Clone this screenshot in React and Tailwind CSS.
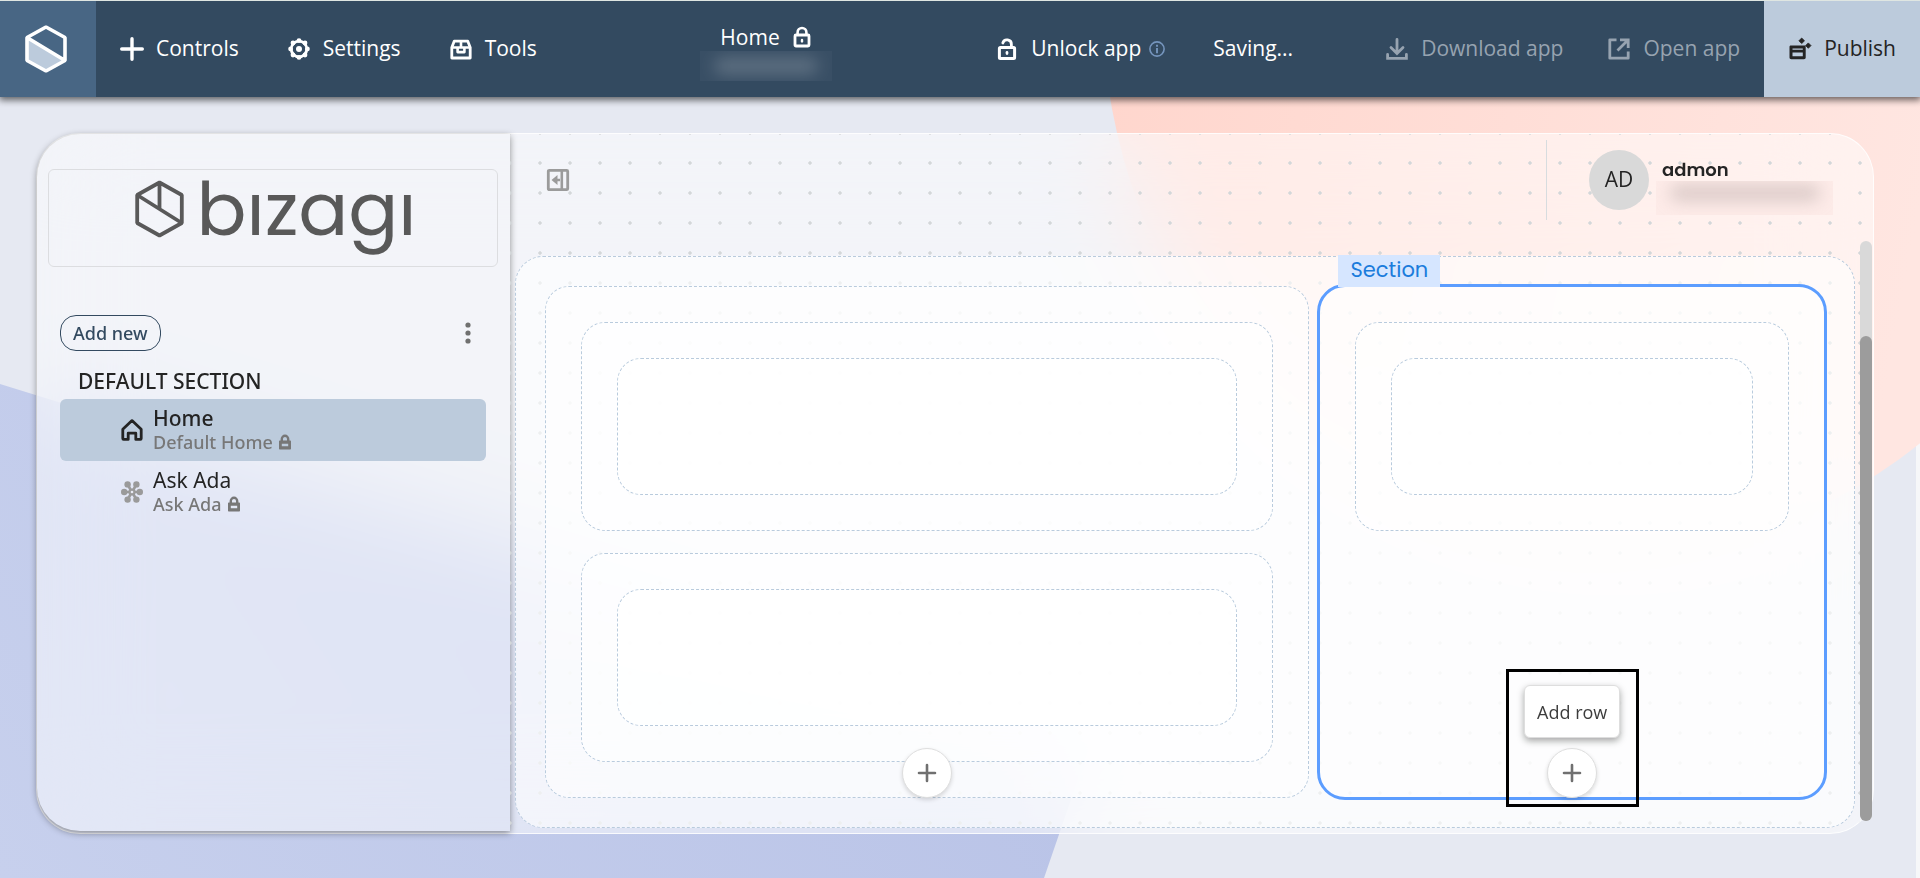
import { useState } from 'react';

const PlusIcon = () => (
  <svg className="w-6 h-6" viewBox="0 0 24 24" fill="none" stroke="currentColor" strokeWidth={3.4} strokeLinecap="round">
    <path d="M12 1.7v20.6M1.7 12h20.6" />
  </svg>
);

const GearIcon = () => (
  <svg className="w-6 h-6" viewBox="0 0 24 24">
    <circle cx="12" cy="12" r="7.8" fill="none" stroke="currentColor" strokeWidth={2.8} />
    <g fill="currentColor">
      <circle cx="12" cy="3.6" r="2.4" />
      <circle cx="12" cy="20.4" r="2.4" />
      <circle cx="3.6" cy="12" r="2.4" />
      <circle cx="20.4" cy="12" r="2.4" />
      <circle cx="6" cy="6" r="2.4" />
      <circle cx="18" cy="6" r="2.4" />
      <circle cx="6" cy="18" r="2.4" />
      <circle cx="18" cy="18" r="2.4" />
      <circle cx="12" cy="12" r="3" />
    </g>
  </svg>
);

const ToolsIcon = () => (
  <svg className="w-6 h-6" viewBox="0 0 24 24" fill="none" stroke="currentColor" strokeLinejoin="round">
    <path strokeWidth={2.8} d="M2.8 10v11h18.4V10M2.8 10.5 5.2 4.2h13.6l2.4 6.3" />
    <path strokeWidth={2.6} d="M2.8 10.5h18.4M12 4v6.5M8.6 10.5v4.6h6.8v-4.6" />
  </svg>
);

const LockIcon = () => (
  <svg className="w-5 h-6" viewBox="0 0 20 24" fill="none" stroke="currentColor">
    <rect x="3" y="10" width="14" height="11" rx="1" strokeWidth={2.8} />
    <path strokeWidth={2.6} d="M5.6 10V7.4a4.4 4.4 0 0 1 8.8 0V10" />
    <path strokeWidth={2.4} strokeLinecap="round" d="M10 15v1.4" />
  </svg>
);

const UnlockIcon = () => (
  <svg className="w-6 h-6" viewBox="0 0 24 24" fill="none" stroke="currentColor">
    <rect x="4.4" y="10.4" width="15.2" height="11" rx="1" strokeWidth={3} />
    <path strokeWidth={2.8} strokeLinecap="round" d="M16.4 10V7.4a4.4 4.4 0 0 0-8.6-1.4" />
    <path strokeWidth={2.6} strokeLinecap="round" d="M12 15.2v1.4" />
  </svg>
);

const InfoIcon = () => (
  <svg className="w-4 h-4 text-[#7595bd]" viewBox="0 0 16 16" fill="none" stroke="currentColor">
    <circle cx="8" cy="8" r="7.1" strokeWidth={1.6} />
    <path strokeWidth={1.9} d="M8 7v5.2M8 3.8v1.9" />
  </svg>
);

const DownloadIcon = () => (
  <svg className="w-6 h-6" viewBox="0 0 24 24" fill="none" stroke="currentColor" strokeWidth={2.8} strokeLinecap="round">
    <path d="M12 2.4v13M6 10.4l6 6 6-6M2.6 17.4v4h18.8v-4" />
  </svg>
);

const OpenIcon = () => (
  <svg className="w-6 h-6" viewBox="0 0 24 24" fill="none" stroke="currentColor" strokeWidth={2.8}>
    <path strokeLinejoin="round" d="M9.5 2.8H2.8v18.4h18.4v-6.7" />
    <path d="M13 2.8h8.2V11M21 3 10.5 13.5" />
  </svg>
);

const PublishIcon = () => (
  <svg className="w-6 h-6" viewBox="0 0 24 24" fill="currentColor">
    <path d="M3 8.5h13.5c.8 0 1.200.6 1.200 1.200V20.500c0 1-.8 1.700-1.700 1.700H3.300c-1 0-1.800-.8-1.800-1.700V9.700C1.500 9 2.200 8.500 3 8.500Zm1.500 3v1.200h10.300v-1.200Zm0 4.100v3.600h10.300v-3.600Z" fillRule="evenodd" />
    <path d="M13.700 1 16.500 3.800 13.700 6.600 10.900 3.800ZM20.300 5.900 23 8.600 20.300 11.300 17.600 8.600Z" stroke="currentColor" strokeWidth={0.8} strokeLinejoin="round" />
  </svg>
);

const CollapseIcon = () => (
  <svg className="w-6 h-6" viewBox="0 0 24 24" fill="none" stroke="currentColor">
    <rect x="2.300" y="2.300" width="19.400" height="19.400" rx="1" strokeWidth={2.800} />
    <path strokeWidth={2.600} d="M15.800 2v20M14 12H9" />
    <path d="M11.500 7v10L5.500 12Z" fill="currentColor" stroke="none" />
  </svg>
);

const HomeIcon = () => (
  <svg className="w-6 h-6" viewBox="0 0 24 24" fill="none" stroke="currentColor" strokeWidth={2.800} strokeLinejoin="round">
    <path d="M2.800 11.200 12 2.600l9.200 8.600v9.400c0 .5-.3.800-.8.800h-4.600v-6.200H8.200v6.200H3.600c-.5 0-.8-.3-.8-.8Z" />
  </svg>
);

const AdaIcon = () => (
  <svg className="w-6 h-6 text-[#9a9a9a]" viewBox="0 0 24 24" fill="currentColor">
    <path stroke="currentColor" strokeWidth={2.600} d="M4 12h16M7.500 4.500l9 15M16.500 4.500l-9 15" />
    <circle cx="4.200" cy="12" r="3.200" />
    <circle cx="19.800" cy="12" r="3.200" />
    <circle cx="7.600" cy="4.400" r="3.200" />
    <circle cx="16.400" cy="4.400" r="3.200" />
    <circle cx="7.600" cy="19.600" r="3.200" />
    <circle cx="16.400" cy="19.600" r="3.200" />
    <circle cx="12" cy="12" r="3.600" />
    <circle cx="12" cy="12" r="1.300" fill="#e9ebf5" />
  </svg>
);

const SmallLockIcon = () => (
  <svg className="w-3 h-4" viewBox="0 0 12 16" fill="none" stroke="currentColor">
    <path strokeWidth={2.400} d="M2.800 7.500V5a3.200 3.200 0 0 1 6.400 0v2.500" />
    <path d="M1 6.500h10c.6 0 1 .4 1 1v7c0 .6-.4 1-1 1H1c-.6 0-1-.4-1-1v-7c0-.6.4-1 1-1Zm1.800 3.200v2.600h6.400V9.700Z" fill="currentColor" fillRule="evenodd" stroke="none" />
  </svg>
);

const AppLogo = () => (
  <svg className="w-[42px] h-12" viewBox="0 0 42 48" fill="none" stroke="#ffffff" strokeWidth={3.600}>
    <path d="M2 12.500 40 35.500 21 46 2 35.500Z" fill="#bccbdc" stroke="none" />
    <path d="M21 2 40 12.500v23L21 46 2 35.500v-23ZM2 12.500 40 35.500" strokeLinejoin="bevel" />
  </svg>
);

const HexLogo = () => (
  <svg className="w-[49px] h-[58px] shrink-0" viewBox="0 0 49 58" fill="none" stroke="#595959" strokeWidth={3.800} strokeLinejoin="bevel">
    <path d="M24.500 2.500 46.800 15v28L24.500 55.500 2.200 43V15ZM2.200 15l44.600 28M24.500 2.500v26.300" />
  </svg>
);

const navItems = [
  { id: 'controls', label: 'Controls', Icon: PlusIcon },
  { id: 'settings', label: 'Settings', Icon: GearIcon },
  { id: 'tools', label: 'Tools', Icon: ToolsIcon },
];

const pages = [
  { id: 'home', title: 'Home', subtitle: 'Default Home', Icon: HomeIcon },
  { id: 'ada', title: 'Ask Ada', subtitle: 'Ask Ada', Icon: AdaIcon },
];

function TopBar() {
  return (
    <header className="relative z-10 flex items-stretch justify-between h-[97px] border-t border-[#dfe6e2] bg-[#334a60] text-[21px] font-medium text-white shadow-[0_2px_7px_1px_rgba(0,0,0,0.6)]">
      <div className="flex items-stretch">
        <button aria-label="Apps" className="w-24 pr-1 flex items-center justify-center bg-[#486684]">
          <AppLogo />
        </button>
        <nav className="flex items-stretch">
          {navItems.map(({ id, label, Icon }) => (
            <button key={id} className="flex items-center gap-3 px-6">
              <Icon />
              {label}
            </button>
          ))}
        </nav>
      </div>

      <div className="flex flex-col items-center pt-[22px]">
        <div className="flex items-center gap-3 leading-7">
          Home
          <LockIcon />
        </div>
        {/* hidden app version */}
        <div className="w-[132px] h-[30px] flex items-center justify-center bg-white/3 overflow-hidden">
          <div className="w-[104px] h-4 rounded-full bg-white/20 blur-[8px]" />
        </div>
      </div>

      <div className="flex items-stretch">
        <button className="flex items-center gap-3 pl-6 pr-2">
          <UnlockIcon />
          Unlock app
        </button>
        <button aria-label="About locking" className="pr-6">
          <InfoIcon />
        </button>
        <span className="flex items-center px-6 mr-11">Saving...</span>
        <button disabled className="flex items-center gap-3 pl-6 pr-5 font-normal text-[#97a3b0]">
          <DownloadIcon />
          Download app
        </button>
        <button disabled className="flex items-center gap-3 px-6 font-normal text-[#97a3b0]">
          <OpenIcon />
          Open app
        </button>
        <button className="flex items-center gap-3 px-6 bg-[#bccbdc] font-normal text-[#242424]">
          <PublishIcon />
          Publish
        </button>
      </div>
    </header>
  );
}

function Sidebar({ activePage, onSelect }) {
  return (
    <aside className="w-[473px] shrink-0 mb-0.5 pl-[11px] pr-3 pt-[35px] rounded-l-[43px] font-['Noto_Sans',sans-serif] shadow-[0_2px_7px_rgba(0,0,0,0.42)]">
      <div className="flex items-start justify-center gap-3 h-[98px] pl-1.5 pt-2.5 border border-[#dcdde0] rounded-md">
        <HexLogo />
        <span className="font-['Poppins','Lato',sans-serif] text-[74px] leading-[58px] text-[#595959]">bızagı</span>
      </div>

      <div className="px-3 pt-12">
        <div className="flex items-center justify-between">
          <button className="h-9 px-3 border border-[#334a60] rounded-2xl text-lg leading-6 font-medium text-[#334a60]">
            Add new
          </button>
          <button aria-label="More options" className="pr-3">
            <svg className="w-3 h-6 text-[#707070]" viewBox="0 0 12 24" fill="currentColor">
              <circle cx="6" cy="4" r="2.600" />
              <circle cx="6" cy="12" r="2.600" />
              <circle cx="6" cy="20" r="2.600" />
            </svg>
          </button>
        </div>

        <h2 className="pt-4 pb-1 pl-[18px] text-[21px] leading-7 font-medium text-[#242424]">DEFAULT SECTION</h2>

        <ul>
          {pages.map(({ id, title, subtitle, Icon }) => {
            const isActive = activePage === id;

            return (
              <li key={id}>
                <button
                  onClick={() => onSelect(id)}
                  className={`w-full h-[62px] flex items-center gap-[9px] pl-[60px] pr-4 rounded-md text-left text-[#242424] ${
                    isActive ? 'bg-[#bccbdc] font-medium' : ''
                  }`}
                >
                  <Icon />
                  <span>
                    <span className="block text-[21px] leading-6">{title}</span>
                    <span className="flex items-center gap-1.5 text-lg leading-6 font-medium text-[#777777]">
                      {subtitle}
                      <SmallLockIcon />
                    </span>
                  </span>
                </button>
              </li>
            );
          })}
        </ul>
      </div>
    </aside>
  );
}

function Row() {
  return (
    <div className="p-[35px] border border-dashed border-[#b9cbdd] rounded-3xl bg-white/50">
      <div className="h-[137px] border border-dashed border-[#b9cbdd] rounded-3xl bg-white/70" />
    </div>
  );
}

function AddButton() {
  return (
    <button
      aria-label="Add row"
      className="w-[50px] h-[50px] flex items-center justify-center rounded-full border border-[#dedede] bg-white text-[#707070] shadow-[0_2px_4px_rgba(0,0,0,0.15)]"
    >
      <svg className="w-5 h-5" viewBox="0 0 20 20" fill="none" stroke="currentColor" strokeWidth={2.600} strokeLinecap="round">
        <path d="M10 2v16M2 10h16" />
      </svg>
    </button>
  );
}

function Canvas() {
  return (
    <div className="grid grid-cols-[3fr_2fr] gap-2 ml-[5px] mr-[18px] mb-[5px] pl-[29px] pr-[27px] py-[29px] border border-dashed border-[#b9cbdd] rounded-[28px] bg-white/60">
      <section className="relative flex flex-col gap-[22px] p-[35px] border border-dashed border-[#b9cbdd] rounded-3xl bg-white/55">
        <Row />
        <Row />
        <div className="absolute inset-x-0 -bottom-px flex justify-center">
          <AddButton />
        </div>
      </section>

      <section className="relative -my-0.5 p-[35px] border-3 border-[#5c9dff] rounded-[28px] bg-white/55">
        <span className="absolute bottom-full left-[18px] w-[102px] h-8 pb-0.5 flex items-center justify-center bg-[#d6e6ff] font-['Poppins','Inter',sans-serif] text-[21px] text-[#1b7cdc]">
          Section
        </span>
        <Row />
        <div className="absolute inset-x-0 -bottom-2.5 flex justify-center">
          <div className="w-[133px] flex flex-col items-center gap-2.5 pt-[13px] pb-1.5 border-3 border-black">
            <div role="tooltip" className="w-24 h-[53px] flex items-center justify-center rounded-md border border-[#dedede] bg-white text-lg text-[#3c3c3c] shadow-[0_3px_7px_rgba(0,0,0,0.35)]">
              Add row
            </div>
            <AddButton />
          </div>
        </div>
      </section>
    </div>
  );
}

function Workspace() {
  return (
    <main className="relative flex-1 min-w-0 bg-[radial-gradient(circle_at_center,#d3d7d9_1.4px,transparent_2px)] bg-size-[30px_30px] bg-position-[-15px_-16px] rounded-r-[43px]">
      <div className="flex items-start justify-between h-[122px] pl-9 pr-10">
        <button aria-label="Collapse menu" className="pt-[34px] text-[#9b9b9b]">
          <CollapseIcon />
        </button>
        <div className="flex items-start">
          <div className="w-px h-20 mt-1.5 mr-[42px] bg-[#d7dcdf]" />
          <div className="w-[60px] h-[60px] mt-4 flex items-center justify-center rounded-full bg-[#d9d9d9] text-[21px] text-[#242424]">
            AD
          </div>
          <div className="w-[177px] ml-[7px] pt-[18px]">
            <div className="h-[29px] pl-1.5 pt-1.5 font-['Poppins','Inter',sans-serif] text-lg leading-6 font-semibold text-[#242424]">admon</div>
            {/* hidden e-mail address */}
            <div className="h-[34px] flex items-start justify-center overflow-hidden bg-[#fdebe8]">
              <div className="w-[150px] h-4 mt-1 rounded-full bg-[#b9a9a7]/50 blur-[8px]" />
            </div>
          </div>
        </div>
      </div>
      <Canvas />
      <div className="absolute top-[107px] bottom-3 right-px w-3 pt-[95px] rounded-full bg-[#d9d9d9]">
        <div className="h-full rounded-full bg-[#9c9c9c]" />
      </div>
    </main>
  );
}

// Large soft shapes behind the app preview
function Backdrop() {
  return (
    <svg className="absolute inset-0 w-full h-full" viewBox="0 0 1920 878" preserveAspectRatio="none" aria-hidden="true">
      <defs>
        <linearGradient id="blueShape" x1="0" y1="1" x2="1" y2="0.7">
          <stop offset="0" stopColor="#c7d0ed" />
          <stop offset="1" stopColor="#b9c3e7" />
        </linearGradient>
        <linearGradient id="coralShape" x1="0" y1="0" x2="1" y2="0.2">
          <stop offset="0.1" stopColor="#ffd6cd" />
          <stop offset="0.9" stopColor="#ffe6e1" />
        </linearGradient>
      </defs>
      <rect width="1916" height="878" fill="#e6e9f2" />
      <path d="M0 384 1097 724 1044 878H0Z" fill="url(#blueShape)" />
      <ellipse cx="1614" cy="0" rx="512" ry="553" fill="url(#coralShape)" />
    </svg>
  );
}

export default function App() {
  const [activePage, setActivePage] = useState('home');

  return (
    <div className="relative min-h-screen overflow-hidden bg-[#f6f7f9] font-['Open_Sans','Noto_Sans',sans-serif]">
      <Backdrop />
      <TopBar />
      <div className="relative pt-9 pb-11 pl-9 pr-[46px]">
        <div className="flex border border-white/80 rounded-[44px] bg-white/50 backdrop-blur-[50px]">
          <Sidebar activePage={activePage} onSelect={setActivePage} />
          <Workspace />
        </div>
      </div>
    </div>
  );
}
